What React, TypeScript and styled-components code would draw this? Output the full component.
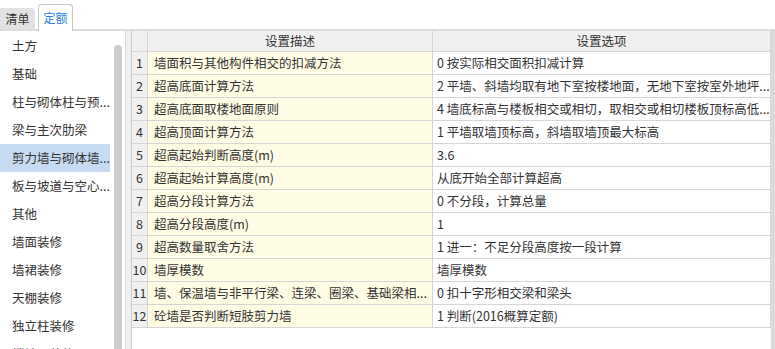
import styled, { createGlobalStyle } from 'styled-components';

const GlobalStyle = createGlobalStyle`
  html, body {
    margin: 0;
    padding: 0;
    background: #ffffff;
  }
  body {
    font-family: "Noto Sans CJK SC", "Noto Sans", sans-serif;
    font-size: 12.5px;
    color: #333333;
  }
`;

const categories = [
  '土方',
  '基础',
  '柱与砌体柱与预...',
  '梁与主次肋梁',
  '剪力墙与砌体墙...',
  '板与坡道与空心...',
  '其他',
  '墙面装修',
  '墙裙装修',
  '天棚装修',
  '独立柱装修',
  '楼地面装修',
];

const rows = [
  ['墙面积与其他构件相交的扣减方法', '0 按实际相交面积扣减计算'],
  ['超高底面计算方法', '2 平墙、斜墙均取有地下室按楼地面，无地下室按室外地坪...'],
  ['超高底面取楼地面原则', '4 墙底标高与楼板相交或相切，取相交或相切楼板顶标高低...'],
  ['超高顶面计算方法', '1 平墙取墙顶标高，斜墙取墙顶最大标高'],
  ['超高起始判断高度(m)', '3.6'],
  ['超高起始计算高度(m)', '从底开始全部计算超高'],
  ['超高分段计算方法', '0 不分段，计算总量'],
  ['超高分段高度(m)', '1'],
  ['超高数量取舍方法', '1 进一：不足分段高度按一段计算'],
  ['墙厚模数', '墙厚模数'],
  ['墙、保温墙与非平行梁、连梁、圈梁、基础梁相...', '0 扣十字形相交梁和梁头'],
  ['砼墙是否判断短肢剪力墙', '1 判断(2016概算定额)'],
];

export default function App() {
  return (
    <Page>
      <GlobalStyle />
      <TabBar>
        <Tab>清单</Tab>
        <Tab $active>定额</Tab>
      </TabBar>
      <Body>
        <Sidebar>
          {categories.map((c, i) => (
            <Category key={c} $active={i === 4}>{c}</Category>
          ))}
        </Sidebar>
        <ScrollTrack>
          <Thumb />
        </ScrollTrack>
        <Gutter />
        <TablePane>
          <Grid>
            <HeadCell />
            <HeadCell>设置描述</HeadCell>
            <HeadCell>设置选项</HeadCell>
            {rows.map(([desc, opt], i) => (
              <Row key={i}>
                <IndexCell>{i + 1}</IndexCell>
                <DescCell>{desc}</DescCell>
                <OptionCell>{opt}</OptionCell>
              </Row>
            ))}
          </Grid>
        </TablePane>
        <RightEdge />
      </Body>
    </Page>
  );
}

const Page = styled.div`
  width: 775px;
  height: 349px;
  overflow: hidden;
  display: flex;
  flex-direction: column;
  background: #ffffff;
`;

const TabBar = styled.div`
  height: 29px;
  flex: none;
  display: flex;
  align-items: flex-end;
  gap: 3px;
  border-bottom: 2px solid #dcdcdc;
`;

const Tab = styled.div<{ $active?: boolean }>`
  width: 35px;
  box-sizing: border-box;
  text-align: center;
  font-size: 12px;
  ${(p) =>
    p.$active
      ? `
    height: 27px;
    line-height: 25px;
    margin-bottom: -2px;
    background: #ffffff;
    color: #2b7fdc;
    border: 1px solid #c9c9c9;
    border-bottom: none;
    border-radius: 4px 4px 0 0;
  `
      : `
    height: 21px;
    line-height: 21px;
    background: #e2e2e2;
    color: #333333;
    border-radius: 0 4px 0 0;
  `}
`;

const Body = styled.div`
  flex: 1;
  min-height: 0;
  display: flex;
`;

const Sidebar = styled.div`
  width: 110px;
  flex: none;
  overflow: hidden;
  padding-top: 1px;
`;

const Category = styled.div<{ $active?: boolean }>`
  height: 28px;
  line-height: 28px;
  padding-left: 12px;
  white-space: nowrap;
  overflow: hidden;
  background: ${(p) => (p.$active ? '#c6dbf1' : 'transparent')};
`;

const ScrollTrack = styled.div`
  width: 15px;
  flex: none;
  display: flex;
  flex-direction: column;
  padding: 14px 0 0 4px;
  box-sizing: border-box;
`;

const Thumb = styled.div`
  width: 8px;
  flex: 1;
  background: #cdcdcd;
  border-radius: 4px 4px 0 0;
`;

const Gutter = styled.div`
  width: 6px;
  flex: none;
  box-sizing: border-box;
  border-left: 1px solid #dddddd;
  background: #efefef;
`;

const TablePane = styled.div`
  width: 639px;
  flex: none;
  border-left: 1px solid #cccccc;
  overflow: hidden;
`;

const Grid = styled.div`
  display: grid;
  grid-template-columns: 16px 285px 1fr;
`;

const Row = styled.div`
  display: contents;
`;

const Cell = styled.div`
  box-sizing: border-box;
  border-right: 1px solid #d6d6d6;
  border-bottom: 1px solid #d6d6d6;
  white-space: nowrap;
  overflow: hidden;
  height: 23px;
  line-height: 22px;
`;

const HeadCell = styled(Cell)`
  height: 21px;
  line-height: 20px;
  background: #f0f0f0;
  text-align: center;
`;

const IndexCell = styled(Cell)`
  background: #f0f0f0;
  text-align: center;
`;

const DescCell = styled(Cell)`
  background: #fffce6;
  padding-left: 6px;
`;

const OptionCell = styled(Cell)`
  background: #ffffff;
  padding-left: 4px;
`;

const RightEdge = styled.div`
  flex: 1;
  box-sizing: border-box;
  background: #dadada;
`;
